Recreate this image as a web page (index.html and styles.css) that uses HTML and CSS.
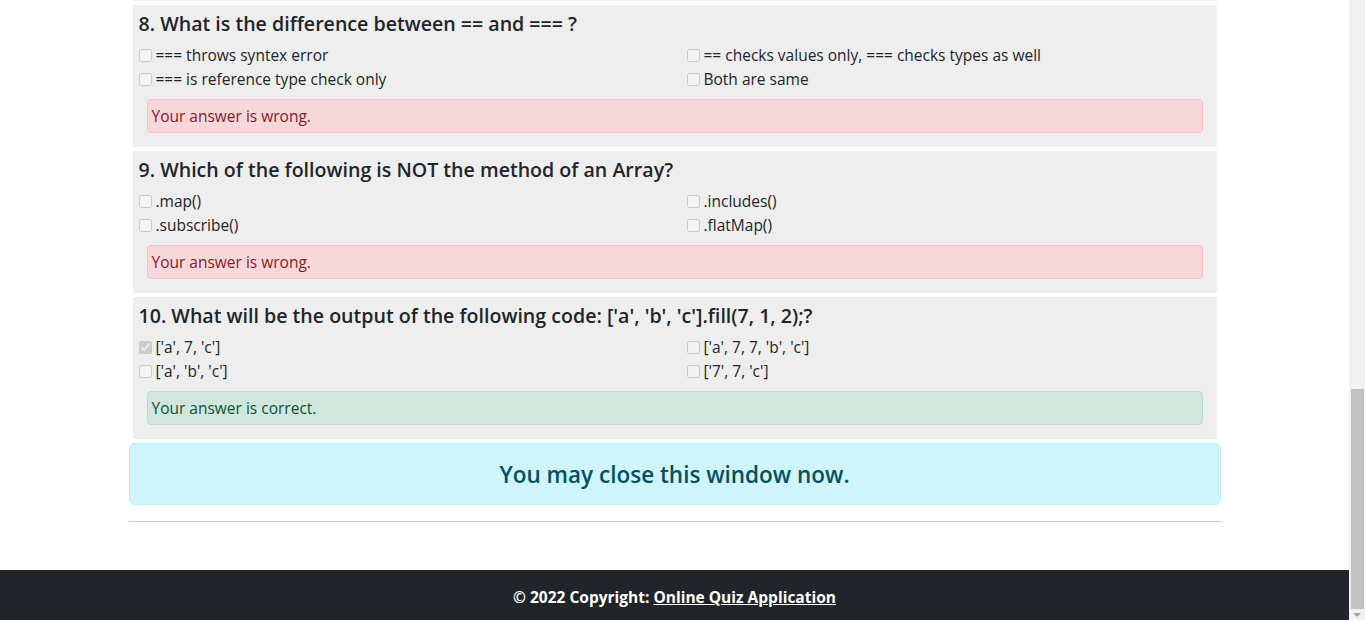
FILE: index.html
```html
<!DOCTYPE html>
<html lang="en">
<head>
<meta charset="utf-8">
<title>Online Quiz Application - Result</title>
<link rel="stylesheet" href="styles.css">
</head>
<body>
<main class="container">
  <div class="card-tail"></div>

  <section class="question">
    <h5 class="q-title">8. What is the difference between == and === ?</h5>
    <div class="options">
      <label class="opt"><input type="checkbox" disabled><span>=== throws syntex error</span></label>
      <label class="opt"><input type="checkbox" disabled><span>== checks values only, === checks types as well</span></label>
      <label class="opt"><input type="checkbox" disabled><span>=== is reference type check only</span></label>
      <label class="opt"><input type="checkbox" disabled><span>Both are same</span></label>
    </div>
    <div class="alert alert-danger">Your answer is wrong.</div>
  </section>

  <section class="question">
    <h5 class="q-title">9. Which of the following is NOT the method of an Array?</h5>
    <div class="options">
      <label class="opt"><input type="checkbox" disabled><span>.map()</span></label>
      <label class="opt"><input type="checkbox" disabled><span>.includes()</span></label>
      <label class="opt"><input type="checkbox" disabled><span>.subscribe()</span></label>
      <label class="opt"><input type="checkbox" disabled><span>.flatMap()</span></label>
    </div>
    <div class="alert alert-danger">Your answer is wrong.</div>
  </section>

  <section class="question">
    <h5 class="q-title">10. What will be the output of the following code: ['a', 'b', 'c'].fill(7, 1, 2);?</h5>
    <div class="options">
      <label class="opt"><input type="checkbox" disabled checked><span>['a', 7, 'c']</span></label>
      <label class="opt"><input type="checkbox" disabled><span>['a', 7, 7, 'b', 'c']</span></label>
      <label class="opt"><input type="checkbox" disabled><span>['a', 'b', 'c']</span></label>
      <label class="opt"><input type="checkbox" disabled><span>['7', 7, 'c']</span></label>
    </div>
    <div class="alert alert-success">Your answer is correct.</div>
  </section>

  <div class="alert-info">
    <h3 class="close-msg">You may close this window now.</h3>
  </div>
  <hr class="divider">
</main>
<footer class="footer">
  © 2022 Copyright: <a href="#" class="footer-link">Online Quiz Application</a>
</footer>

<div class="scrollbar" aria-hidden="true">
  <div class="scroll-thumb"></div>
  <svg class="scroll-arrow" width="16" height="8" viewBox="0 0 16 8"><polygon points="4,2 12,2 8,6" fill="#a3a3a3"/></svg>
</div>
</body>
</html>
```

FILE: styles.css
```css
body {
  margin: 0 16px 0 0;
  font-family: "Open Sans", "Noto Sans", sans-serif;
  font-size: 15.5px;
  color: #212529;
  background: #ffffff;
}
.container {
  width: 1092px;
  margin: 0 auto;
}
.card-tail {
  height: 1px;
  margin: 0 4px;
  background: #eeeeee;
}
.question {
  margin: 4px 4px 0;
  background: #eeeeee;
  padding: 7px 6px 14px;
}
.q-title {
  margin: 0 0 7px;
  font-size: 19.6px;
  line-height: 24px;
  font-weight: 600;
  color: #212529;
}
.options {
  display: grid;
  grid-template-columns: 548px 1fr;
}
.opt {
  display: flex;
  align-items: center;
  height: 24px;
  line-height: 24px;
  color: #212529;
}
.opt input {
  margin: 0 4px 0 0;
  width: 13px;
  height: 13px;
}
.alert {
  margin: 8px 8px 0;
  padding: 4px;
  line-height: 24px;
  border: 1px solid transparent;
  border-radius: 4px;
}
.alert-danger {
  background: #f8d7da;
  border-color: #f5c2c7;
  color: #842029;
}
.alert-success {
  background: #d1e7dd;
  border-color: #badbcc;
  color: #0f5132;
}
.alert-info {
  margin-top: 4px;
  padding: 17px 16px 15px;
  background: #cff4fc;
  border: 1px solid #b6effb;
  border-radius: 6px;
  text-align: center;
}
.close-msg {
  margin: 0;
  font-size: 22.5px;
  line-height: 28px;
  font-weight: 600;
  color: #055160;
}
.divider {
  margin: 16px 0 0;
  border: 0;
  border-top: 1px solid #c8c9ca;
  height: 0;
}
.footer {
  margin-top: 48px;
  height: 50px;
  box-sizing: border-box;
  padding-top: 15px;
  line-height: 24px;
  background: #212529;
  color: #ffffff;
  text-align: center;
  font-weight: 700;
  font-size: 15.5px;
}
.footer-link {
  color: #ffffff;
  text-decoration: underline;
}
.scrollbar {
  position: fixed;
  top: 0;
  right: 0;
  width: 16px;
  height: 100%;
  background: #f1f1f1;
  display: flex;
  flex-direction: column;
  justify-content: flex-end;
  align-items: center;
}
.scroll-thumb {
  width: 13px;
  height: 220px;
  margin-left: 1px;
  background: #c1c1c1;
}
.scroll-arrow {
  display: block;
  margin-top: 2px;
  margin-bottom: 1px;
}
```
